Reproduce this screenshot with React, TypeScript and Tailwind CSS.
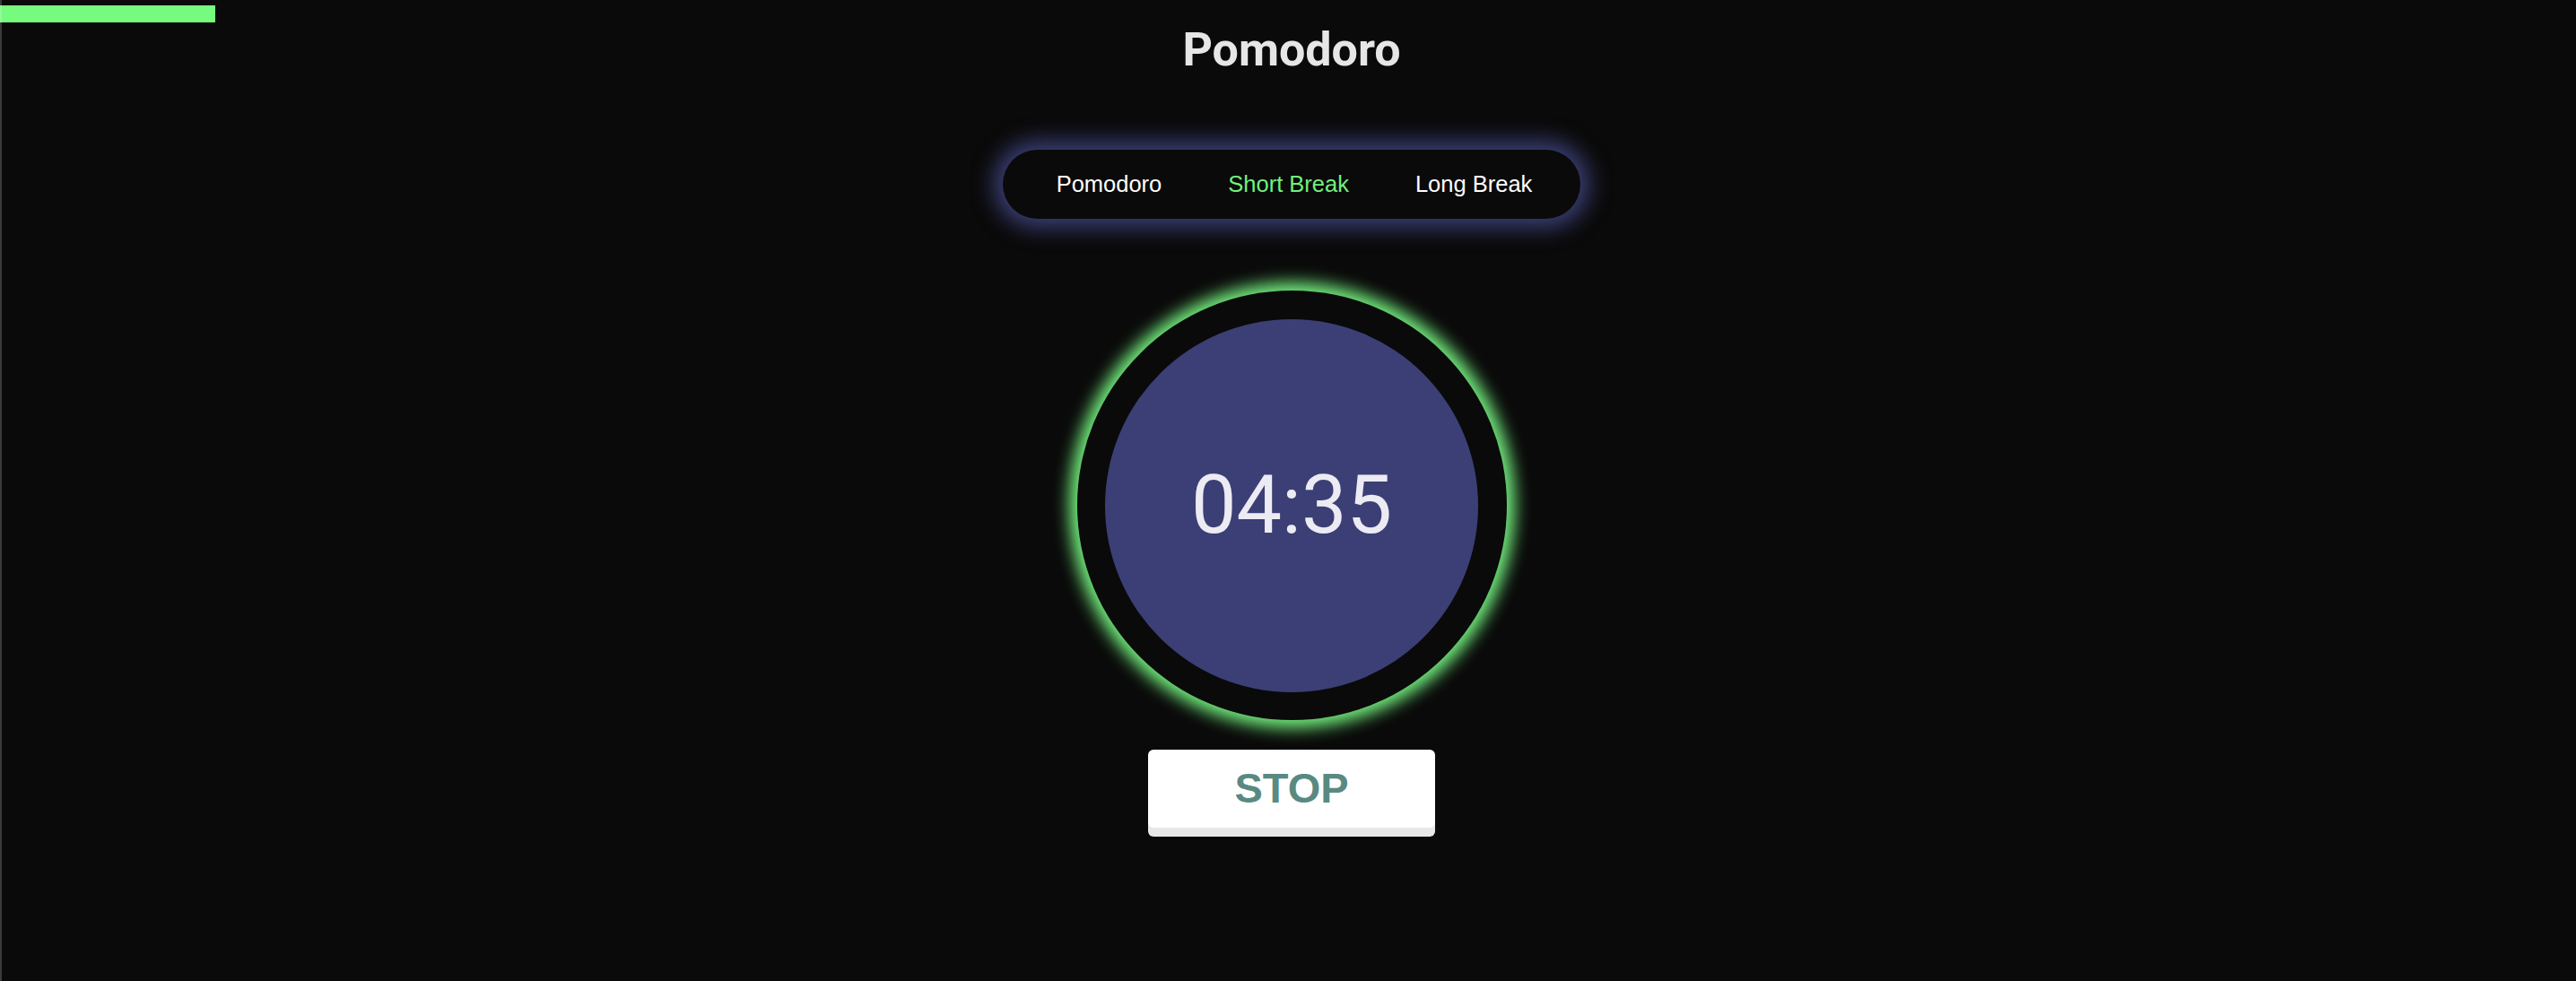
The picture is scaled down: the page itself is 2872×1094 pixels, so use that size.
export default function App() {
  const tabs = [
    { label: "Pomodoro", active: false },
    { label: "Short Break", active: true },
    { label: "Long Break", active: false },
  ];

  return (
    <div className="relative min-h-[1094px] bg-[#0a0a0a] overflow-hidden">
      {/* left edge line */}
      <div className="absolute left-0 top-0 h-full w-[2px] bg-white/20" />

      {/* progress */}
      <div className="pt-[6px]">
        <div className="h-[19px] w-[240px] bg-[#77fb7f]" />
      </div>

      <div className="flex flex-col items-center pl-2">
        <h1 className="text-[52px] font-bold leading-[61px] text-[#e6e6e6] font-['Roboto',sans-serif]">
          Pomodoro
        </h1>

        <div className="mt-[81px] flex h-[77px] items-center gap-[74px] rounded-full bg-[#0a0a0a] pl-[60px] pr-[54px] shadow-[0_0_24px_10px_#3b3f75]">
          {tabs.map((t) => (
            <button
              key={t.label}
              className={
                "text-[25.5px] font-['Liberation_Sans',Arial,sans-serif] " +
                (t.active ? "text-[#72f07c]" : "text-white")
              }
            >
              {t.label}
            </button>
          ))}
        </div>

        <div className="mt-[80px] flex h-[479px] w-[479px] items-center justify-center rounded-full bg-[#0a0a0a] shadow-[0_0_18px_9px_#74f07f]">
          <div className="flex h-[416px] w-[416px] items-center justify-center rounded-full bg-[#3b3f75]">
            <span className="text-[90px] leading-none text-[#ecebf3] font-['Roboto',sans-serif]">
              04:35
            </span>
          </div>
        </div>

        <button className="mt-[33px] flex h-[87px] w-[320px] items-center justify-center rounded-[6px] bg-white shadow-[0_10px_0_#e9e9e9] text-[47px] font-bold text-[#598a82] font-['Liberation_Sans',Arial,sans-serif]">
          STOP
        </button>
      </div>
    </div>
  );
}
